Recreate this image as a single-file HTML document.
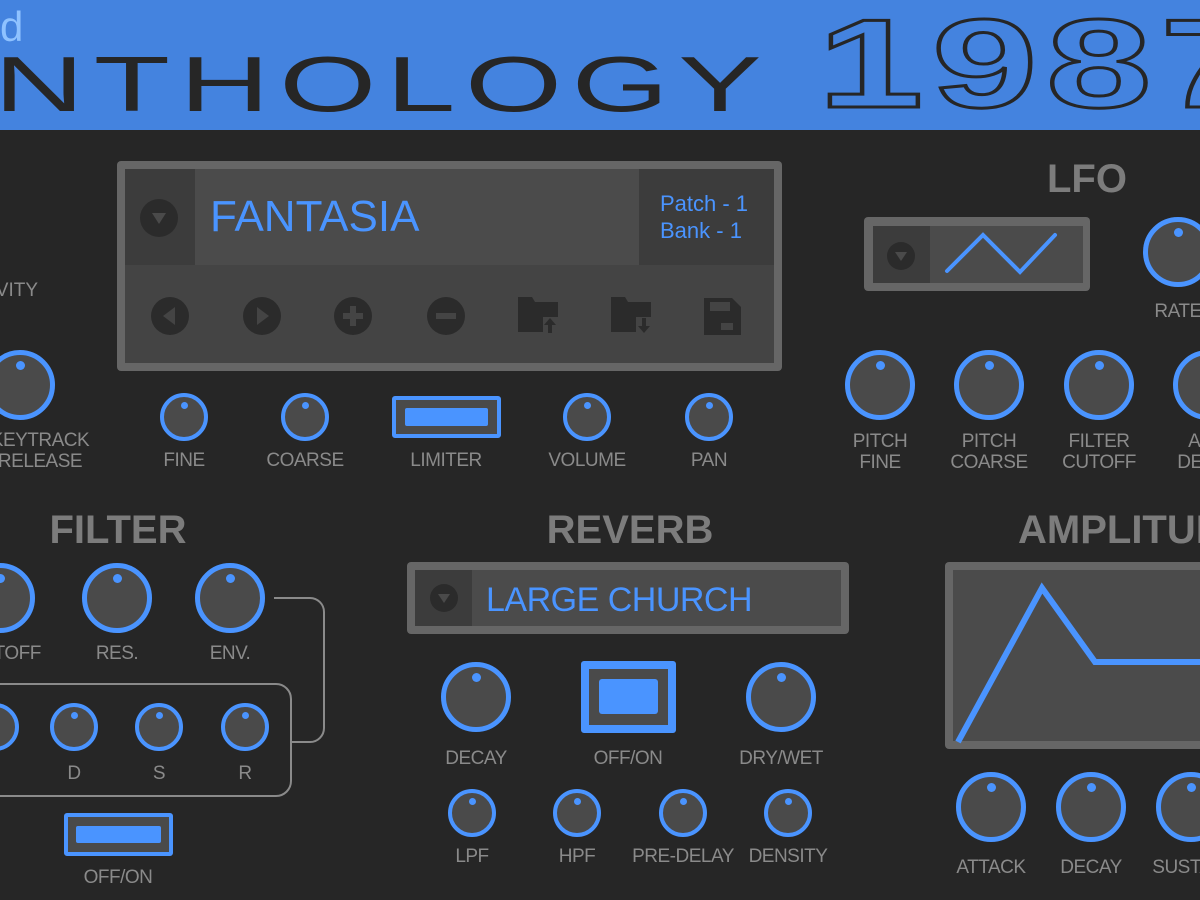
<!DOCTYPE html>
<html><head><meta charset="utf-8"><style>
*{margin:0;padding:0;box-sizing:border-box}
body{width:1200px;height:900px;overflow:hidden;background:#262626;position:relative;font-family:"Liberation Sans",sans-serif}
.a{position:absolute}
.k{position:absolute;border-radius:50%;background:#4a4a4a;border:5px solid #4a94ff}
.k i{position:absolute;left:50%;top:6px;width:9px;height:9px;margin-left:-4px;border-radius:50%;background:#4a94ff}
.s{border-width:4px}
.s i{width:7px;height:7px;margin-left:-3px;top:5px}
.l{position:absolute;width:200px;text-align:center;color:#8a8a8a;font-size:19px;line-height:21px;letter-spacing:-0.5px}
.t{position:absolute;width:300px;text-align:center;color:#7c7c7c;font-size:40px;font-weight:bold}
.ic{position:absolute;width:38px;height:38px;border-radius:50%;background:#2b2b2b}
</style></head><body>
<div class="a" style="left:0;top:0;width:1200px;height:130px;background:#4483df;overflow:hidden">
 <div class="a" style="left:0;top:4px;color:#8fc2ff;font-size:42px;line-height:46px">d</div>
 <div class="a" style="left:-6px;top:42px;font-size:78px;line-height:84px;color:#262626;transform:scaleX(1.6);transform-origin:left;letter-spacing:6px">NTHOLOGY</div>
 <div class="a" style="left:818px;top:0px;font-size:126px;line-height:128px;font-weight:bold;color:#4483df;-webkit-text-stroke:3px #262626;letter-spacing:6px;transform:scaleX(1.5);transform-origin:left">1987</div>
</div>

<!-- left partial -->
<div class="a" style="left:-60px;top:280px;width:98px;text-align:right;color:#8a8a8a;font-size:19px">VITY</div>
<div class="k" style="left:-15px;top:350px;width:70px;height:70px"><i></i></div>
<div class="l" style="left:-60px;top:430px">KEYTRACK<br>RELEASE</div>

<!-- preset panel -->
<div class="a" style="left:117px;top:161px;width:665px;height:210px;background:#666;border-radius:4px"></div>
<div class="a" style="left:125px;top:169px;width:649px;height:96px;background:#4b4b4b"></div>
<div class="a" style="left:125px;top:169px;width:70px;height:96px;background:#3c3c3c"></div>
<div class="a" style="left:639px;top:169px;width:135px;height:96px;background:#3c3c3c"></div>
<div class="a" style="left:125px;top:265px;width:649px;height:98px;background:#444"></div>
<div class="ic" style="left:140px;top:199px"></div>
<svg class="a" style="left:140px;top:199px" width="38" height="38"><path d="M12 14h14l-7 11z" fill="#4a4a4a"/></svg>
<div class="a" style="left:210px;top:192px;color:#4a94ff;font-size:44px;line-height:50px">FANTASIA</div>
<div class="a" style="left:660px;top:190px;color:#4a94ff;font-size:22px;line-height:27px">Patch - 1<br>Bank - 1</div>
<svg class="a" style="left:125px;top:265px" width="649" height="98">
 <g fill="#2b2b2b">
 <circle cx="45" cy="51" r="19"/><circle cx="137" cy="51" r="19"/><circle cx="228" cy="51" r="19"/><circle cx="321" cy="51" r="19"/>
 <path d="M393 32h14l3 5h23v30h-40z"/>
 <path d="M486 32h14l3 5h23v30h-40z"/>
 <path d="M579 33h28l9 9v28h-37z"/>
 </g>
 <rect x="418" y="52" width="16" height="17" fill="#444"/>
 <rect x="511" y="52" width="16" height="17" fill="#444"/>
 <path d="M425 53l-6 7h4v8h4v-8h4z" fill="#2b2b2b"/>
 <path d="M517 53h4v8h4l-6 7-6-7h4z" fill="#2b2b2b"/>
 <path d="M50 42v18l-12-9z" fill="#444"/>
 <path d="M132 42v18l12-9z" fill="#444"/>
 <path d="M225 41h6v7h7v6h-7v7h-6v-7h-7v-6h7z" fill="#444"/>
 <path d="M311 48h20v6h-20z" fill="#444"/>
 <path d="M585 37h20v9h-20z" fill="#444"/><path d="M596 58h12v7h-12z" fill="#444"/>
</svg>
<div class="k s" style="left:160px;top:393px;width:48px;height:48px"><i></i></div>
<div class="k s" style="left:281px;top:393px;width:48px;height:48px"><i></i></div>
<div class="k s" style="left:563px;top:393px;width:48px;height:48px"><i></i></div>
<div class="k s" style="left:685px;top:393px;width:48px;height:48px"><i></i></div>
<div class="a" style="left:392px;top:396px;width:109px;height:42px;border:4px solid #4a94ff;background:#4a4a4a;border-radius:3px"></div>
<div class="a" style="left:405px;top:408px;width:83px;height:18px;background:#4a94ff;border-radius:2px"></div>
<div class="l" style="left:84px;top:450px">FINE</div>
<div class="l" style="left:205px;top:450px">COARSE</div>
<div class="l" style="left:346px;top:450px">LIMITER</div>
<div class="l" style="left:487px;top:450px">VOLUME</div>
<div class="l" style="left:609px;top:450px">PAN</div>

<!-- LFO -->
<div class="t" style="left:937px;top:157px">LFO</div>
<div class="a" style="left:864px;top:217px;width:226px;height:74px;background:#666;border-radius:4px"></div>
<div class="a" style="left:873px;top:226px;width:210px;height:57px;background:#4b4b4b"></div>
<div class="a" style="left:873px;top:226px;width:57px;height:57px;background:#3c3c3c"></div>
<div class="ic" style="left:887px;top:242px;width:28px;height:28px"></div>
<svg class="a" style="left:887px;top:242px" width="28" height="28"><path d="M8 10h12l-6 9z" fill="#4a4a4a"/></svg>
<svg class="a" style="left:0;top:0" width="1200" height="900"><polyline points="947,271 983,235 1020,272 1055,235" fill="none" stroke="#4a94ff" stroke-width="4" stroke-linecap="round"/></svg>
<div class="k" style="left:1143px;top:217px;width:70px;height:70px"><i></i></div>
<div class="l" style="left:1078px;top:301px">RATE</div>
<div class="k" style="left:845px;top:350px;width:70px;height:70px"><i></i></div>
<div class="k" style="left:954px;top:350px;width:70px;height:70px"><i></i></div>
<div class="k" style="left:1064px;top:350px;width:70px;height:70px"><i></i></div>
<div class="k" style="left:1173px;top:350px;width:70px;height:70px"><i></i></div>
<div class="l" style="left:780px;top:431px">PITCH<br>FINE</div>
<div class="l" style="left:889px;top:431px">PITCH<br>COARSE</div>
<div class="l" style="left:999px;top:431px">FILTER<br>CUTOFF</div>
<div class="l" style="left:1108px;top:431px">AMP<br>DECAY</div>

<!-- FILTER -->
<div class="t" style="left:-32px;top:508px">FILTER</div>
<div class="k" style="left:-35px;top:563px;width:70px;height:70px"><i></i></div>
<div class="k" style="left:82px;top:563px;width:70px;height:70px"><i></i></div>
<div class="k" style="left:195px;top:563px;width:70px;height:70px"><i></i></div>
<div class="l" style="left:-96px;top:643px">CUTOFF</div>
<div class="l" style="left:17px;top:643px">RES.</div>
<div class="l" style="left:130px;top:643px">ENV.</div>
<svg class="a" style="left:0;top:0" width="1200" height="900" fill="none" stroke="#8a8a8a" stroke-width="2">
 <path d="M274 598h36a14 14 0 0 1 14 14v116a14 14 0 0 1-14 14h-18"/>
 <path d="M-20 684h296a15 15 0 0 1 15 15v82a15 15 0 0 1-15 15h-296"/>
</svg>
<div class="k s" style="left:-29px;top:703px;width:48px;height:48px"><i></i></div>
<div class="k s" style="left:50px;top:703px;width:48px;height:48px"><i></i></div>
<div class="k s" style="left:135px;top:703px;width:48px;height:48px"><i></i></div>
<div class="k s" style="left:221px;top:703px;width:48px;height:48px"><i></i></div>
<div class="l" style="left:-26px;top:763px">D</div>
<div class="l" style="left:59px;top:763px">S</div>
<div class="l" style="left:145px;top:763px">R</div>
<div class="a" style="left:64px;top:813px;width:109px;height:43px;border:4px solid #4a94ff;background:#4a4a4a;border-radius:3px"></div>
<div class="a" style="left:76px;top:826px;width:85px;height:17px;background:#4a94ff;border-radius:2px"></div>
<div class="l" style="left:18px;top:867px">OFF/ON</div>

<!-- REVERB -->
<div class="t" style="left:480px;top:508px">REVERB</div>
<div class="a" style="left:407px;top:562px;width:442px;height:72px;background:#666;border-radius:4px"></div>
<div class="a" style="left:415px;top:570px;width:426px;height:56px;background:#4b4b4b"></div>
<div class="a" style="left:415px;top:570px;width:57px;height:56px;background:#3c3c3c"></div>
<div class="ic" style="left:430px;top:584px;width:28px;height:28px"></div>
<svg class="a" style="left:430px;top:584px" width="28" height="28"><path d="M8 10h12l-6 9z" fill="#4a4a4a"/></svg>
<div class="a" style="left:486px;top:580px;color:#4a94ff;font-size:34px;line-height:40px;letter-spacing:-0.5px">LARGE CHURCH</div>
<div class="k" style="left:441px;top:662px;width:70px;height:70px"><i></i></div>
<div class="k" style="left:746px;top:662px;width:70px;height:70px"><i></i></div>
<div class="a" style="left:581px;top:661px;width:95px;height:72px;border:8px solid #4a94ff;background:#4a4a4a;border-radius:3px"></div>
<div class="a" style="left:599px;top:679px;width:59px;height:35px;background:#4a94ff;border-radius:3px"></div>
<div class="l" style="left:376px;top:748px">DECAY</div>
<div class="l" style="left:528px;top:748px">OFF/ON</div>
<div class="l" style="left:681px;top:748px">DRY/WET</div>
<div class="k s" style="left:448px;top:789px;width:48px;height:48px"><i></i></div>
<div class="k s" style="left:553px;top:789px;width:48px;height:48px"><i></i></div>
<div class="k s" style="left:659px;top:789px;width:48px;height:48px"><i></i></div>
<div class="k s" style="left:764px;top:789px;width:48px;height:48px"><i></i></div>
<div class="l" style="left:372px;top:846px">LPF</div>
<div class="l" style="left:477px;top:846px">HPF</div>
<div class="l" style="left:583px;top:846px">PRE-DELAY</div>
<div class="l" style="left:688px;top:846px">DENSITY</div>

<!-- AMPLITUDE -->
<div class="a" style="left:1018px;top:508px;color:#7c7c7c;font-size:40px;font-weight:bold;white-space:nowrap">AMPLITUDE</div>
<div class="a" style="left:945px;top:562px;width:300px;height:187px;background:#666;border-radius:4px"></div>
<div class="a" style="left:953px;top:570px;width:300px;height:171px;background:#4b4b4b"></div>
<svg class="a" style="left:0;top:0" width="1200" height="900"><polyline points="958,742 1042,588 1095,662 1205,662" fill="none" stroke="#4a94ff" stroke-width="6"/></svg>
<div class="k" style="left:956px;top:772px;width:70px;height:70px"><i></i></div>
<div class="k" style="left:1056px;top:772px;width:70px;height:70px"><i></i></div>
<div class="k" style="left:1156px;top:772px;width:70px;height:70px"><i></i></div>
<div class="l" style="left:891px;top:857px">ATTACK</div>
<div class="l" style="left:991px;top:857px">DECAY</div>
<div class="l" style="left:1091px;top:857px">SUSTAIN</div>
</body></html>
